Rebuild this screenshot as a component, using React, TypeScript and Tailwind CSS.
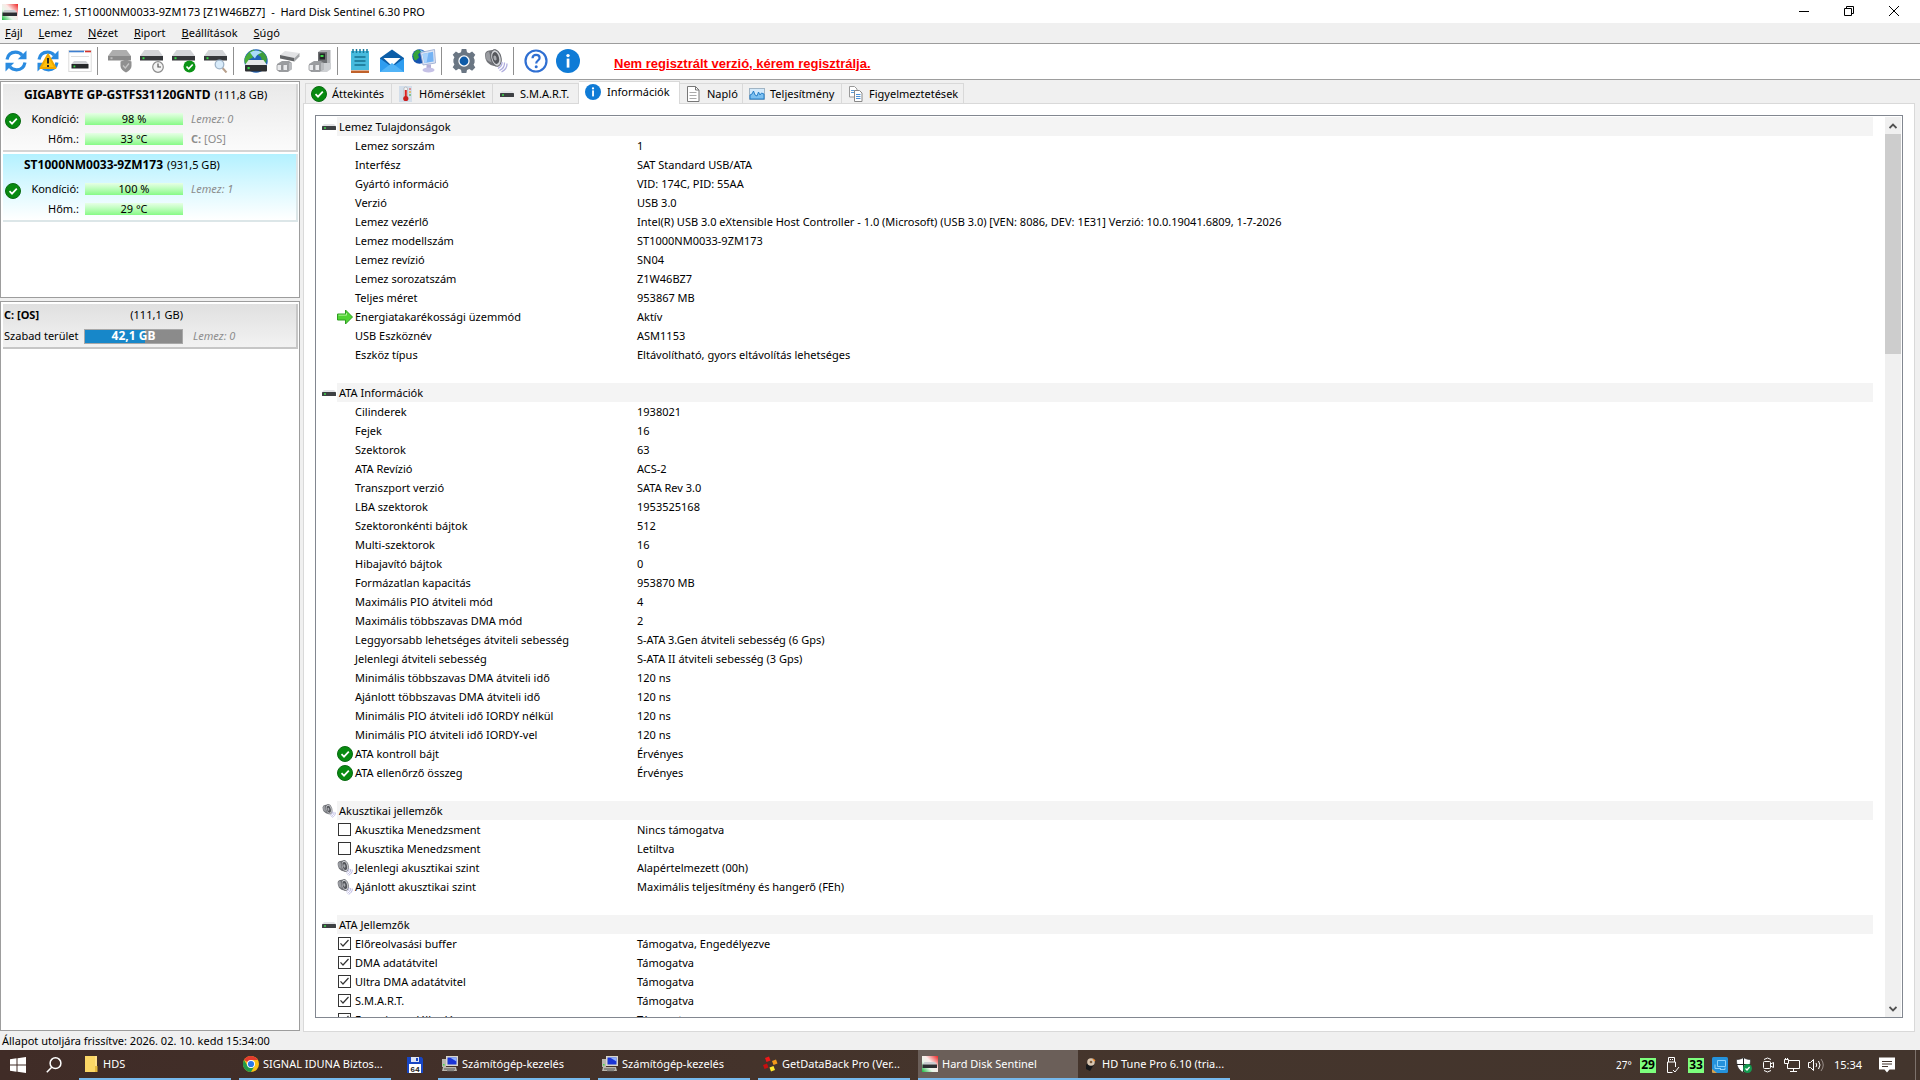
import type { ReactNode } from 'react';

type IconProps = { className?: string };
type Row = { icon?: 'arrow' | 'ok' | 'sound' | 'off' | 'on'; label: string; value: string };
type Section = { title: string; icon: 'disk' | 'sound'; rows: Row[] };

function CheckIcon({ className = 'size-4' }: IconProps) {
  return (
    <svg viewBox="0 0 16 16" className={className}>
      <circle cx="8" cy="8" r="7.5" fill="#078a10" stroke="#0a6b12" strokeWidth="1" />
      <path d="M4.5 8.2 7 10.7 11.8 5.6" fill="none" stroke="#fff" strokeWidth="1.7" />
    </svg>
  );
}

function InfoIcon({ className = 'size-4' }: IconProps) {
  return (
    <svg viewBox="0 0 24 24" className={className}>
      <circle cx="12" cy="12" r="12" fill="#0f7bd6" />
      <circle cx="12" cy="6.6" r="1.7" fill="#fff" />
      <rect x="10.7" y="9.6" width="2.7" height="9" fill="#fff" />
    </svg>
  );
}

function DiskIcon({ className = 'h-4 w-3.5' }: IconProps) {
  return (
    <svg viewBox="0 0 14 16" className={className}>
      <path d="M2 5h10l2 2H0z" fill="#e2e3e6" />
      <rect x="0" y="7" width="14" height="4" rx=".6" fill="#3d4043" />
      <rect x="2" y="8.300" width="2" height="1.400" fill="#3fe04a" />
    </svg>
  );
}

function SoundIcon({ className = 'size-4' }: IconProps) {
  return (
    <svg viewBox="0 0 24 24" className={className}>
      <path d="M1 6Q1 2 5 1.500L12 .5l4 15-4 2q-6-1-9-4.500Q1 10 1 6z" fill="#6f7176" />
      <path d="M1.500 6Q2 3 5 2.500l3 11q-4-1-5.500-3z" fill="#9a9ca1" />
      <ellipse cx="12" cy="9" rx="5" ry="8.500" transform="rotate(-14 12 9)" fill="#d0d2d6" stroke="#63656a" strokeWidth="1" />
      <ellipse cx="11.700" cy="9" rx="3.300" ry="6" transform="rotate(-14 11.700 9)" fill="#55575c" />
      <ellipse cx="11" cy="9" rx="1.500" ry="2.600" transform="rotate(-14 11 9)" fill="#a9abb0" />
      <path d="M18 13c.3 3-1.500 5-4 6.500M20.500 13.500c.3 4-2 6.500-5 8M23 14.500c.2 4-2.200 6.800-5.500 8.500" fill="none" stroke="#b0aedf" strokeWidth="1.300" />
    </svg>
  );
}

function HdsIcon({ className = 'size-4' }: IconProps) {
  return (
    <svg viewBox="0 0 16 16" className={className}>
      <defs>
        <linearGradient id="hdsGrad" x1="0" y1="1" x2="1" y2="0">
          <stop offset="0" stopColor="#16b93c" />
          <stop offset=".35" stopColor="#e8f7ea" />
          <stop offset=".6" stopColor="#fbe9e7" />
          <stop offset="1" stopColor="#ee2222" />
        </linearGradient>
      </defs>
      <rect width="16" height="16" fill="url(#hdsGrad)" />
      <path d="M2.500 6h10l2.500 2.500H.5z" fill="#c9ccd0" />
      <rect x=".5" y="8.500" width="14.500" height="3.500" fill="#2c2e31" />
    </svg>
  );
}

function RefreshShape() {
  return (
    <g fill="none" stroke="#2a8be0" strokeWidth="3.200">
      <path d="M3 10.500C4 5.500 7.500 3.200 11.500 3.200c2.700 0 5 1 6.700 3" />
      <path d="M21 13.500c-1 5-4.500 7.300-8.500 7.300-2.700 0-5-1-6.700-3" />
      <path d="M22.500 1.500v8.700h-8.700z" fill="#2a8be0" stroke="none" />
      <path d="M1.500 22.500v-8.700h8.700z" fill="#2a8be0" stroke="none" />
    </g>
  );
}

function Drive({ gray = false }: { gray?: boolean }) {
  return (
    <g>
      <path d="M4.500 1h14L23 7H0z" fill={gray ? '#adadad' : '#d3d5d8'} />
      <path d="M0 7h23v4.500H0z" fill={gray ? '#8a8a8a' : '#35373a'} />
      <rect x="2.500" y="8.200" width="2" height="2" fill={gray ? '#bbb' : '#35d845'} />
    </g>
  );
}

function Plug() {
  return (
    <g>
      <path d="M1 15l5-3h7l3 2v6l-4 3H3l-2-3z" fill="#9b9da0" />
      <rect x="1" y="15.500" width="4.500" height="6" rx="1" fill="#e9eaec" stroke="#85878a" strokeWidth=".7" />
      <rect x="7" y="15.500" width="4.500" height="6" rx="1" fill="#e9eaec" stroke="#85878a" strokeWidth=".7" />
      <path d="M13 14h3v6l-3 2z" fill="#b9bbbe" />
    </g>
  );
}

function Tool({ children }: { children: ReactNode }) {
  return (
    <svg viewBox="0 0 24 24" className="size-6">
      {children}
    </svg>
  );
}

const toolGroups: { name: string; icon: ReactNode }[][] = [
  [
    { name: 'Frissítés', icon: <Tool><RefreshShape /></Tool> },
    {
      name: 'Figyelmeztetés',
      icon: (
        <Tool>
          <RefreshShape />
          <path d="M12 5.500 19.500 19h-15z" fill="#ffc20e" stroke="#f0a800" strokeWidth="2" strokeLinejoin="round" />
          <path d="M12 9v5.500M12 16v2" stroke="#222" strokeWidth="1.900" />
        </Tool>
      ),
    },
    {
      name: 'Ablak',
      icon: (
        <Tool>
          <rect x=".8" y="1.500" width="22.400" height="21" fill="#fff" stroke="#dcdcdc" />
          <path d="M1 2.500h15" stroke="#3f7fd0" strokeWidth="1.600" />
          <path d="M17 2.500h6" stroke="#d6342c" strokeWidth="1.600" />
          <path d="M3 7.500h18" stroke="#dddddd" />
          <path d="M6 12h12l2.500 3h-17z" fill="#cfd1d4" />
          <rect x="3.500" y="15" width="17" height="4.500" fill="#26282a" />
          <rect x="5.500" y="16.500" width="1.800" height="1.800" fill="#35d845" />
        </Tool>
      ),
    },
  ],
  [
    {
      name: 'Lemez állapot',
      icon: (
        <Tool>
          <Drive gray />
          <path d="M12.500 12.500 18 10.500l5.500 2v4.500c0 3-2.500 5-5.500 6.500-3-1.500-5.500-3.500-5.500-6.500z" fill="#909090" />
          <path d="m15 16.500 2.300 2.500 3.700-4.500" fill="none" stroke="#c4c4c4" strokeWidth="1.300" />
        </Tool>
      ),
    },
    {
      name: 'Időzített teszt',
      icon: (
        <Tool>
          <Drive />
          <circle cx="18" cy="18" r="5.300" fill="#f4f4f4" stroke="#8c8c8c" strokeWidth="1.200" />
          <path d="M18 14.500V18h3" fill="none" stroke="#555" strokeWidth="1.200" />
        </Tool>
      ),
    },
    {
      name: 'Rövid teszt',
      icon: (
        <Tool>
          <Drive />
          <circle cx="17.500" cy="17.500" r="6" fill="#0b9416" />
          <path d="m14.500 17.500 2.200 2.300 4-4.300" fill="none" stroke="#fff" strokeWidth="1.700" />
        </Tool>
      ),
    },
    {
      name: 'Felület teszt',
      icon: (
        <Tool>
          <Drive />
          <path d="m18.500 19 4 4.500" stroke="#b8a08c" strokeWidth="2" />
          <circle cx="15.500" cy="15.500" r="4.300" fill="#d9ecfb" stroke="#9fb4c8" strokeWidth="1.300" />
        </Tool>
      ),
    },
  ],
  [
    {
      name: 'Hálózati lemez',
      icon: (
        <Tool>
          <circle cx="12" cy="12" r="11.700" fill="#1f62b8" />
          <path d="M2 7q3-5 8-6.500l1 3-3 2 1 3-4 2-1 5-3-1Q-.5 10 2 7z" fill="#49ad3a" />
          <path d="M15 1q6 2 8 8l-1 5-4-2-1-4-3-2z" fill="#3f9e3c" />
          <path d="M6 3.500q6-4 12 0-6 2-7 6-3-3-5-6z" fill="#a9dcf7" />
          <path d="M4.500 11h15l3.500 5H1z" fill="#e6e8ea" />
          <rect x="1" y="16" width="22" height="6.500" rx="1" fill="#2d2f32" />
          <rect x="3.500" y="18" width="2.200" height="2.200" fill="#35d845" />
        </Tool>
      ),
    },
    {
      name: 'Csatlakozás',
      icon: (
        <Tool>
          <path d="M4 6 9 2l14.500 2-5 5z" fill="#e2e3e5" />
          <path d="M4 6v3.500l14.500 3V9z" fill="#636568" />
          <path d="m18.500 9 5-5v3.500l-5 5z" fill="#a3a5a8" />
          <Plug />
        </Tool>
      ),
    },
    {
      name: 'Leválasztás',
      icon: (
        <Tool>
          <path d="M10 3 13 1h9.500v17l-3 3H10z" fill="#aeb0b3" />
          <path d="M10 3h9v17h-9z" fill="#6d6f72" />
          <rect x="11.500" y="4.500" width="5.500" height="6" fill="#222426" />
          <rect x="12.500" y="6" width="3" height="2" fill="#3ed84b" />
          <path d="M14 14h9v6l-4 3h-6z" fill="#cdcfd2" />
          <Plug />
        </Tool>
      ),
    },
  ],
  [
    {
      name: 'Jegyzet',
      icon: (
        <Tool>
          <rect x="3" y="2" width="18" height="19" fill="#47bbdd" />
          <path d="M5 0v4M8.500 0v4M12 0v4M15.500 0v4M19 0v4" stroke="#187a9b" strokeWidth="1.500" />
          <path d="M6.500 8h11M6.500 12h11M6.500 16h11" stroke="#17718f" strokeWidth="1.500" />
          <rect x="3" y="21.500" width="18" height="2.500" fill="#c0612a" />
        </Tool>
      ),
    },
    {
      name: 'E-mail',
      icon: (
        <Tool>
          <path d="M0 9 12 .5 24 9v14H0z" fill="#0c5ea8" />
          <path d="M3.500 9h17l-8.500 8z" fill="#fff" />
          <path d="M0 9.500 12 18l12-8.500V23H0z" fill="#2f9df0" />
          <path d="M0 23 12 14l12 9z" fill="#52b4f7" />
        </Tool>
      ),
    },
    {
      name: 'Távoli gép',
      icon: (
        <Tool>
          <circle cx="7.500" cy="7.500" r="7.300" fill="#1553b0" />
          <path d="M1 6q1-4 5-5.500l3 2-3 3 1 3-3 3-2-1z" fill="#35a53a" />
          <path d="M8 1q3 0 5 3l-3 1z" fill="#8fd2f5" />
          <path d="M8.500 3.500 22.500.5l1 13.500L11 16z" fill="#dde5f5" stroke="#93a4cc" strokeWidth=".8" />
          <path d="M10.500 5 21 2.800l.7 9.700-9.200 1.500z" fill="#74b3f4" />
          <path d="m10.500 5 6-1.300-2 10-2 .3z" fill="#a8d2fb" />
          <path d="M14.500 15.500h4.500v4.500h-4.500z" fill="#b3afd8" />
          <ellipse cx="16.500" cy="21" rx="6" ry="2.500" fill="#c5c1e6" />
        </Tool>
      ),
    },
  ],
  [
    {
      name: 'Beállítások',
      icon: (
        <Tool>
          <path
            d="M9.700 0h4.600l.7 3.200 2.300 1 2.800-1.700 3.200 3.200-1.700 2.800 1 2.300v2.700l-1 2.300 1.700 2.700-3.200 3.200-2.800-1.700-2.300 1-.7 3.200H9.700L9 20.800l-2.300-1-2.800 1.700-3.200-3.200 1.700-2.700-1-2.300v-2.700l1-2.300L.7 5.700l3.200-3.200 2.800 1.700 2.300-1z"
            fill="#6a7683"
          />
          <circle cx="12" cy="12" r="5.700" fill="#fff" />
          <circle cx="12" cy="12" r="4.400" fill="#0e5ba8" />
        </Tool>
      ),
    },
    { name: 'Hang', icon: <SoundIcon className="size-6" /> },
  ],
  [
    {
      name: 'Súgó',
      icon: (
        <Tool>
          <circle cx="12" cy="12" r="10.500" fill="#fff" stroke="#2f6fd2" strokeWidth="2.200" />
          <path d="M8.500 9.300c.1-2.200 1.600-3.500 3.600-3.500s3.500 1.200 3.500 3.100c0 2.600-3.400 2.700-3.400 5.600" fill="none" stroke="#2f6fd2" strokeWidth="2.200" />
          <circle cx="12.200" cy="17.800" r="1.500" fill="#2f6fd2" />
        </Tool>
      ),
    },
    { name: 'Információ', icon: <InfoIcon className="size-6" /> },
  ],
];

const menu = ['Fájl', 'Lemez', 'Nézet', 'Riport', 'Beállítások', 'Súgó'];

const sections: Section[] = [
  {
    title: 'Lemez Tulajdonságok',
    icon: 'disk',
    rows: [
      { label: 'Lemez sorszám', value: '1' },
      { label: 'Interfész', value: 'SAT Standard USB/ATA' },
      { label: 'Gyártó információ', value: 'VID: 174C, PID: 55AA' },
      { label: 'Verzió', value: 'USB 3.0' },
      {
        label: 'Lemez vezérlő',
        value: 'Intel(R) USB 3.0 eXtensible Host Controller - 1.0 (Microsoft) (USB 3.0) [VEN: 8086, DEV: 1E31] Verzió: 10.0.19041.6809, 1-7-2026',
      },
      { label: 'Lemez modellszám', value: 'ST1000NM0033-9ZM173' },
      { label: 'Lemez revízió', value: 'SN04' },
      { label: 'Lemez sorozatszám', value: 'Z1W46BZ7' },
      { label: 'Teljes méret', value: '953867 MB' },
      { icon: 'arrow', label: 'Energiatakarékossági üzemmód', value: 'Aktív' },
      { label: 'USB Eszköznév', value: 'ASM1153' },
      { label: 'Eszköz típus', value: 'Eltávolítható, gyors eltávolítás lehetséges' },
    ],
  },
  {
    title: 'ATA Információk',
    icon: 'disk',
    rows: [
      { label: 'Cilinderek', value: '1938021' },
      { label: 'Fejek', value: '16' },
      { label: 'Szektorok', value: '63' },
      { label: 'ATA Revízió', value: 'ACS-2' },
      { label: 'Transzport verzió', value: 'SATA Rev 3.0' },
      { label: 'LBA szektorok', value: '1953525168' },
      { label: 'Szektoronkénti bájtok', value: '512' },
      { label: 'Multi-szektorok', value: '16' },
      { label: 'Hibajavító bájtok', value: '0' },
      { label: 'Formázatlan kapacitás', value: '953870 MB' },
      { label: 'Maximális PIO átviteli mód', value: '4' },
      { label: 'Maximális többszavas DMA mód', value: '2' },
      { label: 'Leggyorsabb lehetséges átviteli sebesség', value: 'S-ATA 3.Gen átviteli sebesség (6 Gps)' },
      { label: 'Jelenlegi átviteli sebesség', value: 'S-ATA II átviteli sebesség (3 Gps)' },
      { label: 'Minimális többszavas DMA átviteli idő', value: '120 ns' },
      { label: 'Ajánlott többszavas DMA átviteli idő', value: '120 ns' },
      { label: 'Minimális PIO átviteli idő IORDY nélkül', value: '120 ns' },
      { label: 'Minimális PIO átviteli idő IORDY-vel', value: '120 ns' },
      { icon: 'ok', label: 'ATA kontroll bájt', value: 'Érvényes' },
      { icon: 'ok', label: 'ATA ellenőrző összeg', value: 'Érvényes' },
    ],
  },
  {
    title: 'Akusztikai jellemzők',
    icon: 'sound',
    rows: [
      { icon: 'off', label: 'Akusztika Menedzsment', value: 'Nincs támogatva' },
      { icon: 'off', label: 'Akusztika Menedzsment', value: 'Letiltva' },
      { icon: 'sound', label: 'Jelenlegi akusztikai szint', value: 'Alapértelmezett (00h)' },
      { icon: 'sound', label: 'Ajánlott akusztikai szint', value: 'Maximális teljesítmény és hangerő (FEh)' },
    ],
  },
  {
    title: 'ATA Jellemzők',
    icon: 'disk',
    rows: [
      { icon: 'on', label: 'Előreolvasási buffer', value: 'Támogatva, Engedélyezve' },
      { icon: 'on', label: 'DMA adatátvitel', value: 'Támogatva' },
      { icon: 'on', label: 'Ultra DMA adatátvitel', value: 'Támogatva' },
      { icon: 'on', label: 'S.M.A.R.T.', value: 'Támogatva' },
      { icon: 'on', label: 'Energiagazdálkodás', value: 'Támogatva' },
    ],
  },
];

function RowIcon({ icon, id }: { icon: Row['icon']; id: string }) {
  if (icon === 'ok') return <CheckIcon />;
  if (icon === 'sound') return <SoundIcon />;
  if (icon === 'arrow')
    return (
      <svg viewBox="0 0 16 16" className="size-4">
        <path d="M.5 5h8V1l7 7-7 7v-4h-8z" fill="#4fd433" stroke="#2f9c22" strokeWidth="1" />
        <path d="M1.500 6.200h8V4" fill="none" stroke="#a8f08f" strokeWidth="1" />
      </svg>
    );
  if (icon === 'off' || icon === 'on')
    return (
      <span className="ml-px grid size-[13px]">
        <input id={id} type="checkbox" defaultChecked={icon === 'on'} className="peer col-start-1 row-start-1 size-[13px] appearance-none border border-[#333] bg-white" />
        <svg viewBox="0 0 13 13" className="pointer-events-none invisible col-start-1 row-start-1 size-[13px] peer-checked:visible">
          <path d="M2.500 6.300 5 9l5.500-6" fill="none" stroke="#333" strokeWidth="1.200" />
        </svg>
      </span>
    );
  return null;
}

function PropertyTable() {
  return (
    <table className="w-full table-fixed border-collapse text-left whitespace-nowrap">
      <colgroup>
        <col className="w-[21px]" />
        <col className="w-[18px]" />
        <col className="w-[282px]" />
        <col />
      </colgroup>
      {sections.map((s, si) => (
        <tbody key={s.title}>
          <tr className="h-[19px]">
            <td className="p-0 pl-1.5">{s.icon === 'disk' ? <DiskIcon /> : <SoundIcon className="size-3.5" />}</td>
            <th colSpan={3} className="bg-[#f4f4f4] p-0 pl-0.5 font-normal">{s.title}</th>
          </tr>
          {s.rows.map((r, ri) => {
            const id = 'prop-' + si + '-' + ri;
            return (
              <tr key={id} className="h-[19px]">
                <td className="p-0" />
                <td className="p-0"><RowIcon icon={r.icon} id={id} /></td>
                <td className="p-0">{r.icon === 'on' || r.icon === 'off' ? <label htmlFor={id}>{r.label}</label> : r.label}</td>
                <td className="p-0">{r.value}</td>
              </tr>
            );
          })}
          <tr className="h-[19px]"><td colSpan={4} className="p-0" /></tr>
        </tbody>
      ))}
    </table>
  );
}

const tabs: { label: string; icon: ReactNode; width: string; active?: boolean }[] = [
  { label: 'Áttekintés', icon: <CheckIcon />, width: 'w-[87px]' },
  {
    label: 'Hőmérséklet',
    width: 'w-[101px]',
    icon: (
      <svg viewBox="0 0 16 16" className="size-4">
        <rect x="1" y="0" width="13" height="16" fill="#d3deea" />
        <rect x="6" y="1" width="3.500" height="11" rx="1.700" fill="#f4f4f4" stroke="#999" strokeWidth=".5" />
        <path d="M7.800 4v8" stroke="#d22" strokeWidth="2" />
        <circle cx="7.800" cy="12.500" r="2.600" fill="#c91f1f" />
        <path d="M11 3h2" stroke="#d44" /><path d="M11 6h2" stroke="#e90" /><path d="M11 9h2" stroke="#3a3" />
      </svg>
    ),
  },
  { label: 'S.M.A.R.T.', icon: <DiskIcon className="size-4" />, width: 'w-[86px]' },
  { label: 'Információk', icon: <InfoIcon />, width: 'w-[101px]', active: true },
  {
    label: 'Napló',
    width: 'w-[63px]',
    icon: (
      <svg viewBox="0 0 16 16" className="size-4">
        <path d="M1.500.5h8l3.500 3.500v11.500H1.500z" fill="#fff" stroke="#777" />
        <path d="M9.500.5V4H13" fill="none" stroke="#777" />
        <path d="M3.500 6.500h7M3.500 9.500h7M3.500 12.500h7" stroke="#aaa" />
      </svg>
    ),
  },
  {
    label: 'Teljesítmény',
    width: 'w-[99px]',
    icon: (
      <svg viewBox="0 0 16 16" className="size-4">
        <rect x=".5" y="2.500" width="15" height="11" fill="#d3eafb" stroke="#a0b4c4" />
        <path d="M1 13V9l2-1 1.500-3L6 9l2 1 1.500-4L11 9l1.500-2L15 8v5z" fill="#7cc0f0" stroke="#1c77c3" strokeWidth=".9" />
      </svg>
    ),
  },
  {
    label: 'Figyelmeztetések',
    width: 'w-[122px]',
    icon: (
      <svg viewBox="0 0 16 16" className="size-4">
        <path d="M1.500.5h5l2.500 2.500v8H1.500z" fill="#fff" stroke="#999" />
        <path d="M3 4.500h4M3 6.500h4" stroke="#5a9bd8" />
        <path d="M6.500 4.500h5L14 7v8.500H6.500z" fill="#fff" stroke="#888" />
        <path d="M8 8.500h4.500M8 10.500h4.500M8 12.500h4.500" stroke="#4a90d6" />
      </svg>
    ),
  },
];

function Meter({ text }: { text: string }) {
  return (
    <div className="flex h-3 w-[98px] items-center justify-center bg-linear-to-b from-[#e6ffe6] to-[#86fa86]">{text}</div>
  );
}

function DiskCard({ name, size, health, temp, disk, volume, active }: {
  name: string; size: string; health: string; temp: string; disk: string; volume?: string; active?: boolean;
}) {
  return (
    <div className={'h-[68px] border-r-2 border-b-2 pl-0.5 ' + (active ? 'border-[#dce6e8] bg-linear-to-b from-[#b3f1ff] to-white' : 'border-[#d4d4d4] bg-linear-to-b from-[#e9e9e9] to-[#fbfbfb]')}>
      <div className="mb-[3px] flex h-[22px] items-center gap-1 pl-[19px] whitespace-nowrap">
        <b className="text-xs">{name}</b>
        <span>{size}</span>
      </div>
      <div className="grid grid-cols-[16px_58px_98px_1fr] items-center">
        <CheckIcon className="mt-1 size-4" />
        <span className="h-5 text-right leading-5">Kondíció:</span>
        <div className="pl-1.5"><Meter text={health} /></div>
        <i className="pl-3.5 text-[#8c8c8c]">{disk}</i>
        <span className="col-start-2 h-5 text-right leading-5">Hőm.:</span>
        <div className="pl-1.5"><Meter text={temp} /></div>
        {volume && <span className="pl-3.5 text-[#8c8c8c]"><b>C:</b> {volume}</span>}
      </div>
    </div>
  );
}

function ManageIcon() {
  return (
    <svg viewBox="0 0 16 16" className="size-4">
      <rect x="4" y="0" width="12" height="10" fill="#d9d6cc" />
      <rect x="5.500" y="1.500" width="9" height="7" fill="#1b35d6" />
      <path d="M8 1.500h6.500v4z" fill="#8fb0ff" />
      <path d="M0 3h4v8H0zM1 11h13l1 4H0z" fill="#b9b7ae" />
      <path d="M2 13h11M5 15h7" stroke="#555" />
      <rect x="1" y="8" width="1.500" height="1.500" fill="#3ed84b" />
    </svg>
  );
}

const tasks: { label: string; icon: ReactNode; active?: boolean; pin?: boolean }[] = [
  {
    label: 'HDS',
    icon: (
      <svg viewBox="0 0 16 16" className="size-4">
        <path d="M2 0h12v13H2z" fill="#ffe08a" />
        <path d="M2 0h10v16H2z" fill="#fbd766" />
        <path d="M12 10h2.500v6H12z" fill="#e6b93c" />
      </svg>
    ),
  },
  {
    label: 'SIGNAL IDUNA Biztos...',
    icon: (
      <svg viewBox="0 0 16 16" className="size-4">
        <circle cx="8" cy="8" r="8" fill="#fbc116" />
        <path d="M8 8 1.070 4A8 8 0 0 1 14.930 4H8z" fill="#e33b2e" />
        <path d="M1.070 4A8 8 0 0 0 8 16l3.500-6L8 8 4.540 10z" fill="#229a48" />
        <circle cx="8" cy="8" r="4" fill="#fff" />
        <circle cx="8" cy="8" r="3.100" fill="#2b78ea" />
      </svg>
    ),
  },
  {
    label: 'Mentés',
    pin: true,
    icon: (
      <svg viewBox="0 0 16 16" className="size-4">
        <path d="M0 0h14.500L16 1.500V16H0z" fill="#1846c4" />
        <rect x="4" y="0" width="8" height="5" fill="#dfe5f5" />
        <rect x="9" y="1" width="2" height="3" fill="#1846c4" />
        <rect x="2" y="7" width="12" height="9" fill="#fff" />
        <text x="8" y="14.500" textAnchor="middle" fontSize="8" fontWeight="700" fontFamily="Liberation Mono, monospace" fill="#222">64</text>
      </svg>
    ),
  },
  { label: 'Számítógép-kezelés', icon: <ManageIcon /> },
  { label: 'Számítógép-kezelés', icon: <ManageIcon /> },
  {
    label: 'GetDataBack Pro (Ver...',
    icon: (
      <svg viewBox="0 0 16 16" className="size-4">
        <path d="m3 2 4-1.500 1.500 4-4 1.500z" fill="#f01818" />
        <path d="m10 5 4-1.500 1.500 4-4 1.500z" fill="#f39a1a" />
        <path d="m1 9 4-1.500 1.500 4-4 1.500z" fill="#c60f0f" />
        <path d="m7.500 11.500 4-1.500 1.500 4-4 1.500z" fill="#ffe92c" />
      </svg>
    ),
  },
  { label: 'Hard Disk Sentinel', icon: <HdsIcon />, active: true },
  {
    label: 'HD Tune Pro 6.10 (tria...',
    icon: (
      <svg viewBox="0 0 16 16" className="size-4">
        <path d="m4 9 5-6 4 4-5 8-4-2z" fill="#17181a" />
        <circle cx="9" cy="6" r="3.800" fill="#d9c6b0" />
        <circle cx="9" cy="6" r="1.300" fill="#7a5b3c" />
        <path d="m11 3 2 2" stroke="#f08a2a" strokeWidth="1.500" />
      </svg>
    ),
  },
];

export default function App() {
  return (
    <div className="flex h-screen flex-col overflow-hidden bg-[#f0f0f0] font-['Noto_Sans','Open_Sans',sans-serif] text-[11px] leading-4 text-black">
      <header className="flex h-[23px] shrink-0 items-center bg-white pl-0.5">
        <HdsIcon />
        <h1 className="flex-1 pl-[5px] whitespace-pre">Lemez: 1, ST1000NM0033-9ZM173 [Z1W46BZ7]  -  Hard Disk Sentinel 6.30 PRO</h1>
        <div className="flex pr-1 pb-0.5">
          <button aria-label="Kis méret" className="flex h-5 w-[45px] items-center justify-center">
            <svg viewBox="0 0 10 10" className="size-2.5"><path d="M0 5.500h10" stroke="#000" /></svg>
          </button>
          <button aria-label="Előző méret" className="flex h-5 w-[45px] items-center justify-center">
            <svg viewBox="0 0 10 10" className="size-2.5"><path d="M.5 2.500h7v7h-7zM2.500 2.500v-2h7v7h-2" fill="none" stroke="#000" /></svg>
          </button>
          <button aria-label="Bezárás" className="flex h-5 w-[45px] items-center justify-center">
            <svg viewBox="0 0 10 10" className="size-2.5"><path d="m0 0 10 10M10 0 0 10" stroke="#000" /></svg>
          </button>
        </div>
      </header>

      <nav className="flex h-[21px] shrink-0 items-center gap-4 border-b border-[#9d9d9d] pl-[5px]">
        {menu.map((m) => (
          <button key={m} className="whitespace-nowrap"><u>{m[0]}</u>{m.slice(1)}</button>
        ))}
      </nav>

      <div className="flex h-9 shrink-0 items-center border-b border-[#9d9d9d] bg-white pb-0.5 pl-1">
        {toolGroups.map((g, i) => (
          <div key={i} className={'flex items-center gap-2 ' + (i > 0 ? 'ml-[5px] border-l border-[#8f8f8f] py-0.5 pl-2.5' : '')}>
            {g.map((t) => (
              <button key={t.name} aria-label={t.name} title={t.name}>{t.icon}</button>
            ))}
          </div>
        ))}
        <a href="#register" className="ml-[34px] pt-1.5 font-['Liberation_Sans',sans-serif] text-[13px] font-bold whitespace-nowrap text-[#ff0000] underline">
          Nem regisztrált verzió, kérem regisztrálja.
        </a>
      </div>

      <main className="flex min-h-0 flex-1 gap-[3px] pt-px">
        <aside className="flex w-[300px] shrink-0 flex-col gap-[3px] pb-px">
          <section className="flex h-[217px] shrink-0 flex-col gap-0.5 border border-[#9d9d9d] bg-white p-0.5 pr-px">
            <DiskCard name="GIGABYTE GP-GSTFS31120GNTD" size="(111,8 GB)" health="98 %" temp="33 °C" disk="Lemez: 0" volume="[OS]" />
            <DiskCard name="ST1000NM0033-9ZM173" size="(931,5 GB)" health="100 %" temp="29 °C" disk="Lemez: 1" active />
          </section>
          <section className="flex-1 border border-[#9d9d9d] bg-white p-0.5 pr-px">
            <div className="flex h-[45px] flex-col gap-[3px] border-r-2 border-b-2 border-[#c6c6c6] bg-linear-to-b from-[#e0e0e0] to-[#f2f2f2] pt-0.5 pl-px">
              <div className="flex h-[18px] w-[179px] items-center justify-between">
                <b>C: [OS]</b>
                <span>(111,1 GB)</span>
              </div>
              <div className="flex h-[18px] items-center">
                <span className="w-20 whitespace-nowrap">Szabad terület</span>
                <div className="flex h-[15px] w-[99px] items-center justify-center border border-[#a8a8a8] bg-linear-to-r from-[#1787c9] from-62% to-[#8b8b8b] to-62% text-xs font-bold text-white">42,1 GB</div>
                <i className="pl-2.5 text-[#8c8c8c]">Lemez: 0</i>
              </div>
            </div>
          </section>
        </aside>

        <div className="flex min-w-0 flex-1 flex-col pr-[5px]">
          <div role="tablist" className="flex h-[22px] shrink-0 items-end pl-0.5">
            {tabs.map((t) => (
              <button
                key={t.label}
                role="tab"
                aria-selected={!!t.active}
                className={
                  'flex items-center border-t border-r border-[#d9d9d9] pl-1.5 whitespace-nowrap first:border-l first:pl-[5px] ' +
                  t.width +
                  (t.active ? ' z-10 -mb-px h-[23px] gap-1.5 bg-white pb-[3px]' : ' h-5 gap-[5px]')
                }
              >
                <span className="shrink-0">{t.icon}</span>
                {t.label}
              </button>
            ))}
          </div>
          <div className="flex min-h-0 flex-1 border border-[#d9d9d9] bg-white pt-[11px] pr-[11px] pb-[13px] pl-[11px]">
            <div className="flex min-w-0 flex-1 gap-3 border border-[#828790] pt-px pr-px">
              <div className="min-w-0 flex-1 overflow-hidden"><PropertyTable /></div>
              <div className="flex w-4 shrink-0 flex-col bg-[#f0f0f0]">
                <button aria-label="Fel" className="flex h-[17px] items-center justify-center">
                  <svg viewBox="0 0 8 6" className="h-1.5 w-2"><path d="M.5 5 4 1.500 7.500 5" fill="none" stroke="#505050" strokeWidth="1.800" /></svg>
                </button>
                <div className="h-[220px] bg-[#cdcdcd]" />
                <button aria-label="Le" className="mt-auto flex h-[17px] items-center justify-center">
                  <svg viewBox="0 0 8 6" className="h-1.5 w-2"><path d="M.5 1 4 4.500 7.500 1" fill="none" stroke="#505050" strokeWidth="1.800" /></svg>
                </button>
              </div>
            </div>
          </div>
        </div>
      </main>

      <div className="flex h-[18px] shrink-0 items-center pl-0.5">Állapot utoljára frissítve: 2026. 02. 10. kedd 15:34:00</div>

      <footer className="flex h-[30px] shrink-0 items-center bg-linear-to-r from-[#402c27] via-[#45352c] to-[#43352d] text-white">
        <button aria-label="Start" className="flex w-9 justify-center">
          <svg viewBox="0 0 16 16" className="size-4" fill="#fff"><path d="M0 2.200 6.500 1.300v6.200H0zM7.500 1.200 16 0v7.500H7.500zM0 8.500h6.500v6.200L0 13.800zM7.500 8.500H16V16l-8.500-1.200z" /></svg>
        </button>
        <button aria-label="Keresés" className="flex w-[43px] pl-2.5">
          <svg viewBox="0 0 16 16" className="size-4" fill="none" stroke="#fff" strokeWidth="1.500"><circle cx="9.500" cy="6.200" r="5.400" /><path d="M5.700 10.200.8 15.300" /></svg>
        </button>
        <div className="flex h-full">
          {tasks.map((t, i) =>
            t.pin ? (
              <button key={i} aria-label={t.label} className="flex w-[39px] items-center pl-2">{t.icon}</button>
            ) : (
              <button key={i} className={'flex w-40 flex-col ' + (t.active ? 'bg-[#6b5f59]' : 'pr-2')}>
                <span className="flex flex-1 items-center gap-1 pl-1 whitespace-nowrap">{t.icon}{t.label}</span>
                <span className="h-0.5 w-full bg-[#76b9ed]" />
              </button>
            ),
          )}
        </div>
        <div className="ml-auto flex items-center gap-2">
          <span className="w-4 text-[10px]">27°</span>
          <span className="flex h-[15px] w-4 items-center justify-center bg-[#7dff7d] text-xs font-bold text-black">29</span>
          <svg viewBox="0 0 16 16" className="size-4" fill="none" stroke="#fff"><path d="M4.500 5V.5h6V5M3.500 5h8v5M3.500 5v10.500h5M9 13l2 2 4-5" /><path d="M6 2.500h1M8 2.500h1" /></svg>
          <span className="flex h-[15px] w-4 items-center justify-center bg-[#7dff7d] text-xs font-bold text-black">33</span>
          <svg viewBox="0 0 16 16" className="size-4">
            <rect width="16" height="16" rx="1.500" fill="#2492dc" />
            <path d="M0 12l5 4H1.500A1.500 1.500 0 0 1 0 14.500z" fill="#d8a14a" />
            <path d="M5.500 3.500h8v6h-8zM3 7.500v4h6M8 12.500h5v-2" fill="none" stroke="#8fd3fa" />
          </svg>
          <svg viewBox="0 0 16 16" className="size-4">
            <path d="M7.500.5c2 1.500 4.500 2 7 2 0 6-1.500 10.500-7 13C2 13 .5 8.500.5 2.500c2.500 0 5-.5 7-2z" fill="#fff" stroke="#222" strokeWidth=".6" />
            <path d="M7.500 1v14M.8 7.500h13.400" stroke="#222" />
            <circle cx="11.500" cy="11.500" r="4.500" fill="#159a50" />
            <path d="m9.500 11.500 1.500 1.500 2.600-3" fill="none" stroke="#fff" strokeWidth="1.200" />
          </svg>
          <svg viewBox="0 0 16 16" className="size-4" fill="none" stroke="#fff"><rect x="3.500" y="4.500" width="7" height="7" rx="1" /><path d="m10.500 7 3-1.500v5L10.500 9M4 2.500Q7.500-.5 11 2.500M4 13.500q3.500 3 7 0" /></svg>
          <svg viewBox="0 0 16 16" className="size-4" fill="none" stroke="#fff"><path d="M5 3.500h10.500v8H3.500V7M9.500 11.500v3M6 14.500h7M.5 2.500h4v4h-4zM1.500 1v1.500M3.500 1v1.500" /></svg>
          <svg viewBox="0 0 16 16" className="size-4" fill="none" stroke="#fff"><path d="M.5 5.500h2l3-3v11l-3-3h-2zM8 6q1.500 2 0 4M10.500 4q3 4 0 8" /><path d="M13 2q4.500 6 0 12" stroke="#9a8f8a" /></svg>
          <time className="w-[29px] pl-0.5">15:34</time>
          <svg viewBox="0 0 16 16" className="ml-2.5 size-4"><path d="M0 .5h16v12h-5.500L8 15.500l-2.500-3H0z" fill="#fff" /><path d="M3 4.500h10M3 7h10M3 9.500h6" stroke="#43352d" /></svg>
          <span className="ml-3 h-[30px] w-[5px] border-l border-[#7d726c]" />
        </div>
      </footer>
    </div>
  );
}
